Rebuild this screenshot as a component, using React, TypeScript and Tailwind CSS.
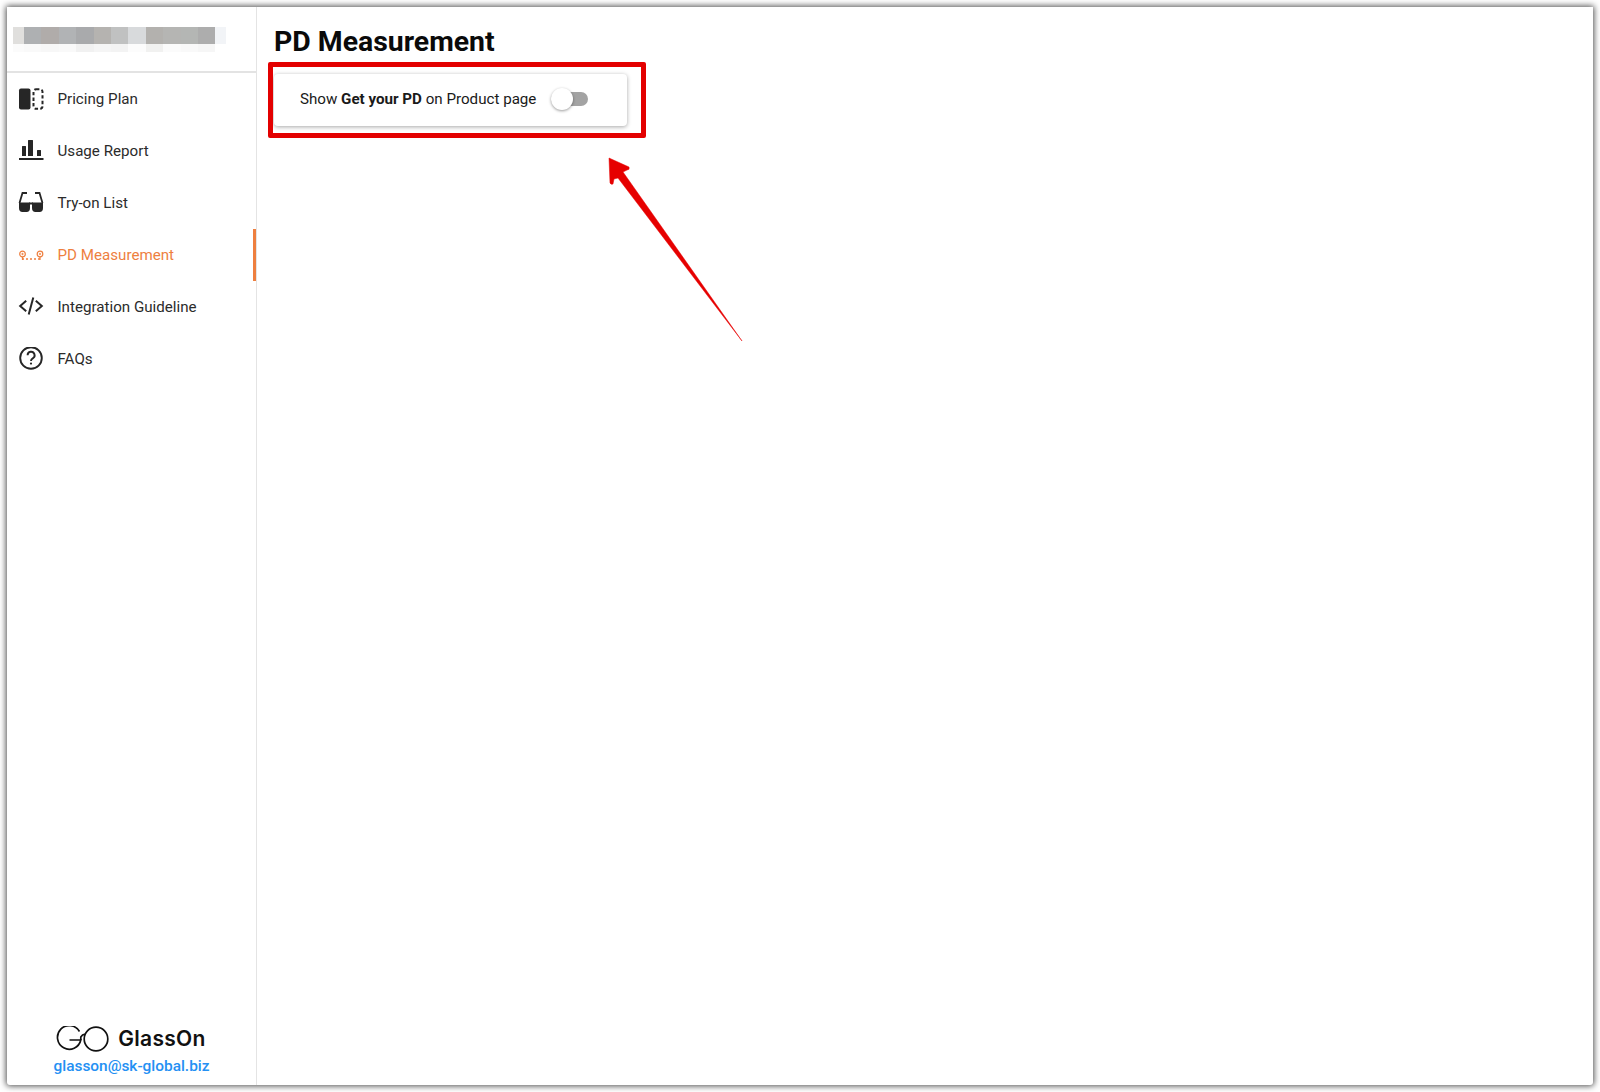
import React from 'react';

const PricingIcon = () => (
  <svg width="26" height="24" viewBox="0 0 26 24" fill="none">
    <rect x="1" y="1.5" width="11.5" height="21" rx="2" fill="#262626" />
    <rect x="15.5" y="2.3" width="9" height="19.4" rx="2.5" stroke="#262626" strokeWidth="2" strokeDasharray="3.4 2.2" />
  </svg>
);

const UsageIcon = () => (
  <svg width="26" height="24" viewBox="0 0 26 24" fill="#262626">
    <rect x="4" y="7" width="4" height="10" rx="0.5" />
    <rect x="10" y="1" width="5" height="16" rx="0.5" />
    <rect x="19" y="11" width="4" height="6" rx="0.5" />
    <rect x="1" y="19" width="24.5" height="2" />
  </svg>
);

const TryOnIcon = () => (
  <svg width="26" height="24" viewBox="0 0 26 24" fill="none">
    <path d="M1.5 12 L4.5 2 H9 M24.5 12 L21.5 2 H17" stroke="#262626" strokeWidth="1.8" />
    <path d="M1 11.5 H12 V17 Q12 21 8.5 21 H4.5 Q1 21 1 17 Z M14 11.5 H25 V17 Q25 21 21.5 21 H17.5 Q14 21 14 17 Z" fill="#262626" />
    <rect x="11" y="11.5" width="4" height="2" fill="#262626" />
  </svg>
);

const MeasureIcon = () => (
  <svg width="26" height="24" viewBox="0 0 26 24" fill="none" stroke="#ee7f3f">
    <circle cx="4.5" cy="11" r="2.8" strokeWidth="1.2" />
    <circle cx="4.5" cy="11" r="0.8" fill="#ee7f3f" strokeWidth="0.5" />
    <circle cx="22" cy="11" r="2.8" strokeWidth="1.2" />
    <circle cx="22" cy="11" r="0.8" fill="#ee7f3f" strokeWidth="0.5" />
    <path d="M4 16 H22.5" strokeWidth="1.3" strokeDasharray="2 2" />
    <path d="M4.5 14 V17 M22 14 V17" strokeWidth="1.2" />
  </svg>
);

const CodeIcon = () => (
  <svg width="26" height="24" viewBox="0 0 26 24" fill="none" stroke="#262626" strokeWidth="2">
    <path d="M8.2 5.8 L2.2 11 L8.2 16.2" />
    <path d="M17.8 5.8 L23.8 11 L17.8 16.2" />
    <path d="M15.3 2.5 L10.7 19.5" />
  </svg>
);

const HelpIcon = () => (
  <svg width="26" height="24" viewBox="0 0 26 24" fill="none" stroke="#262626">
    <circle cx="13" cy="11" r="10.8" strokeWidth="1.9" />
    <path d="M9.6 8.3 A3.5 3.5 0 1 1 14.8 11.3 Q13 12.3 13 14" strokeWidth="1.9" />
    <circle cx="13" cy="16.6" r="1.1" fill="#262626" stroke="none" />
  </svg>
);

const GlassesLogo = () => (
  <svg width="53" height="26" viewBox="0 0 53 26" fill="none" stroke="#111" strokeWidth="1.7">
    <path d="M23.5 5.5 A11.8 11.8 0 1 0 24.8 14 H13.5" />
    <path d="M24.8 14 V11 Q27 7.5 29.5 8.5" />
    <circle cx="40" cy="13" r="11.8" />
  </svg>
);

const menu = [
  { label: 'Pricing Plan', icon: <PricingIcon /> },
  { label: 'Usage Report', icon: <UsageIcon /> },
  { label: 'Try-on List', icon: <TryOnIcon /> },
  { label: 'PD Measurement', icon: <MeasureIcon />, active: true },
  { label: 'Integration Guideline', icon: <CodeIcon /> },
  { label: 'FAQs', icon: <HelpIcon /> },
];

const blurTop = ['#e0dfdd', '#aeb0b2', '#b0acaa', '#b1b3b5', '#a9aaac', '#b5b3b0', '#c0c1c1', '#d8dadc', '#b3b1ae', '#b5b5b3', '#b4b6b4', '#adadad'];
const blurBottom = ['#fbfbfb', '#f9f9f9', '#f7f7f7', '#f9f9f9', '#f1f1f1', '#f5f5f5', '#f3f3f3', '#fcfcfc', '#f1f1f0', '#fbfbfb', '#f9f9f9', '#f6f6f6'];

export default function App() {
  return (
    <div className="relative h-[1092px] w-[1600px] overflow-hidden bg-white p-[7px] font-['Roboto',sans-serif]">
      <div className="flex h-full w-full overflow-hidden rounded-b-[3px] bg-white shadow-[0_0_6px_1px_rgba(0,0,0,0.7)]">
        <aside className="flex h-full w-[250px] shrink-0 flex-col border-r border-[#e4e4e4]">
          <div className="h-[66px] shrink-0 border-b-2 border-[#e3e3e3] pl-[6px] pt-5">
            <div className="flex h-[17px]">
              {blurTop.map((c, i) => (
                <div key={i} className={i === 0 ? 'h-full w-[11px]' : 'h-full w-[17.4px]'} style={{ backgroundColor: c }} />
              ))}
              <div className="h-full w-[11px] bg-[#f2f4f7]" />
            </div>
            <div className="flex h-[8px]">
              {blurBottom.map((c, i) => (
                <div key={i} className={i === 0 ? 'h-full w-[11px]' : 'h-full w-[17.4px]'} style={{ backgroundColor: c }} />
              ))}
            </div>
          </div>
          <nav className="flex flex-col">
            {menu.map((item) => (
              <div
                key={item.label}
                className={`flex h-[52px] items-center gap-[13.5px] pl-[11px] text-[15.15px] ${
                  item.active ? 'border-r-[3px] border-[#ee7f3f] text-[#ee7f3f]' : 'text-[#2b2b2b]'
                }`}
              >
                {item.icon}
                <span>{item.label}</span>
              </div>
            ))}
          </nav>
          <div className="mt-auto flex flex-col items-center pb-[7px]">
            <div className="flex items-center gap-[9px] pr-[1px]">
              <GlassesLogo />
              <span className="font-['Inter',sans-serif] text-[21px] font-semibold leading-[26px] tracking-[0.3px] text-[#111]">GlassOn</span>
            </div>
            <a className="mt-[2px] text-[15.4px] font-medium leading-[24px] text-[#2490f3]">glasson@sk-global.biz</a>
          </div>
        </aside>
        <main className="flex-1 pl-[17px]">
          <h1 className="pt-[16px] text-[28.4px] font-bold leading-[38px] text-[#0a0a0a]">PD Measurement</h1>
          <div className="mt-[13px] flex h-[52px] w-[353px] items-center gap-[15px] rounded-[4px] bg-white pb-[2px] pl-[26px] shadow-[0_1px_4px_rgba(0,0,0,0.35)]">
            <span className="text-[15.15px] text-[#1a1a1a]">
              Show <b className="font-bold">Get your PD</b> on Product page
            </span>
            <div className="relative h-[14px] w-[37px] rounded-full bg-[#a3a3a3]">
              <div className="absolute left-0 top-[-4px] h-[22px] w-[22px] rounded-full bg-white shadow-[0_1px_3px_rgba(0,0,0,0.4)]" />
            </div>
          </div>
        </main>
      </div>
      {/* annotation over the screenshot */}
      <div className="absolute left-[268px] top-[62px] h-[76px] w-[378px] rounded-[2px] border-[5px] border-[#e30000]" />
      <svg className="absolute left-[600px] top-[150px]" width="150" height="200" viewBox="0 0 150 200">
        <path d="M9 8 L29 17 Q30 20 27 20 L23 22 L142 191 L18 28 L14 29 L13 34 Q11 35 10 33 Z" fill="#e60000" stroke="#e60000" strokeWidth="0.5" />
      </svg>
    </div>
  );
}
